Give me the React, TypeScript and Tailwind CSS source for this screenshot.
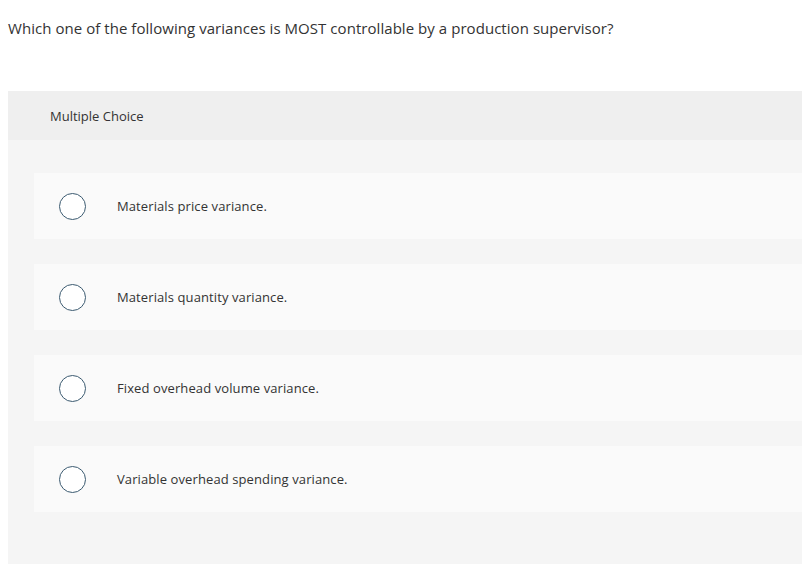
import React from "react";

const options = [
  "Materials price variance.",
  "Materials quantity variance.",
  "Fixed overhead volume variance.",
  "Variable overhead spending variance.",
];

export default function App() {
  return (
    <div
      className="w-[802px] h-[564px] overflow-hidden bg-white text-[#333]"
      style={{ fontFamily: '"Open Sans", Arial, sans-serif' }}
    >
      <div className="pl-2 pt-[17px] h-[91px] text-[15px] leading-[22px] tracking-[0.05px] text-[#333]">
        Which one of the following variances is MOST controllable by a production supervisor?
      </div>
      <div className="ml-2 bg-[#f5f5f5] h-[473px]">
        <div className="h-[49px] bg-[#efefef] flex items-center pl-[42px] pt-[2px] text-[13px] text-[#333]">
          Multiple Choice
        </div>
        <div className="pt-[33px] pl-[26px] flex flex-col gap-[25px]">
          {options.map((o) => (
            <div key={o} className="h-[66px] bg-[#fafafa] flex items-center">
              <div className="ml-[25px] w-[27px] h-[27px] rounded-full border-[1.5px] border-[#3b5a70] bg-white shrink-0" />
              <div className="ml-[31px] pt-[2px] text-[13px] tracking-[0.1px] text-[#333]">{o}</div>
            </div>
          ))}
        </div>
      </div>
    </div>
  );
}
